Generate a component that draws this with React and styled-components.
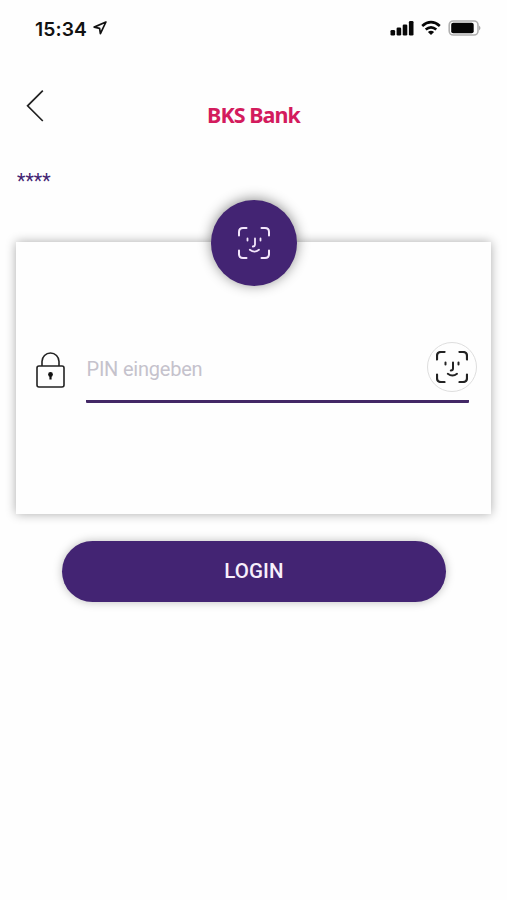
import React, { useState } from 'react'
import styled, { createGlobalStyle } from 'styled-components'

const GlobalStyle = createGlobalStyle`
  * { box-sizing: border-box; }
  body { margin: 0; background: #fefefe; font-family: Roboto, 'Liberation Sans', sans-serif; }
`
const Page = styled.div`
  width: 507px; height: 900px; overflow: hidden;
  display: flex; flex-direction: column; background: #fefefe;
`
const StatusBar = styled.div`
  height: 56px; padding: 0 26px 0 35px;
  display: flex; align-items: center; justify-content: space-between;
`
const Clock = styled.div`
  display: flex; align-items: center; gap: 5px;
  font-family: Inter, sans-serif; font-size: 19.3px; font-weight: 600;
  line-height: 24px; color: #111; padding-top: 1px;
  svg { margin-bottom: 2px; }
`
const Time = styled.span`width: 53px; letter-spacing: .1px; white-space: nowrap;`
const Indicators = styled.div`display: flex; align-items: center; gap: 7px;`
const Header = styled.header`
  height: 100px; padding: 0 26px;
  display: grid; grid-template-columns: 60px 1fr 60px; align-items: center;
`
const BackButton = styled.button`
  width: 18px; height: 34px; padding: 0; border: none; background: none; display: flex;
`
const Logo = styled.h1`
  margin: 17px 0 0; text-align: center; color: #d31b5d;
  font-family: 'Noto Sans', sans-serif; font-size: 21.5px; font-weight: 700;
  line-height: 28px; letter-spacing: -.95px; white-space: nowrap;
`
const User = styled.div`
  height: 86px; padding: 14px 17px 0;
  color: #432473; font-size: 19.5px; line-height: 24px;
`
const Card = styled.section`
  height: 272px; margin: 0 16px; padding: 0 14px 0 20px;
  display: flex; flex-direction: column; background: #fefefe;
  box-shadow: 0 0 10px rgba(0,0,0,.33);
`
const Badge = styled.div`
  width: 86px; height: 86px; margin: -42.5px 0 0 175px; flex: none;
  display: flex; align-items: center; justify-content: center;
  border-radius: 50%; background: #432473; color: #f3e6fb;
  box-shadow: 0 -1px 13px rgba(0,0,0,.45);
`
const PinRow = styled.label`
  margin-top: 55.5px; display: flex; align-items: flex-start;
`
const LockSlot = styled.span`width: 50px; padding-top: 11px; display: flex;`
const Field = styled.span`
  width: 383px; height: 62px; display: flex; align-items: flex-start;
  border-bottom: 3px solid #432866; border-radius: 1px;
`
const PinInput = styled.input`
  width: 341px; flex: none; height: 56px; padding: 0 0 0 .5px; border: none; background: none;
  font-family: Roboto, sans-serif; font-size: 20px; letter-spacing: -.22px; color: #432473;
  &:focus { outline: none; }
  &::placeholder { color: #c5c2cc; opacity: 1; }
`
const FaceButton = styled.button`
  width: 50px; height: 50px; flex: none; padding: 0; margin-top: 1px;
  display: flex; align-items: center; justify-content: center;
  border: 1px solid #dedede; border-radius: 50%; background: #fefefe; color: #222;
`
const LoginButton = styled.button`
  width: 384px; height: 61px; margin: 26.5px 0 0 62px; padding: 0;
  border: none; border-radius: 31px; background: #432473; color: #f8effb;
  font-family: Roboto, sans-serif; font-size: 20.5px; font-weight: 500; letter-spacing: .1px;
  box-shadow: 0 0 10px rgba(0,0,0,.26);
`

function FaceIcon({ size = 32, stroke = 2 }) {
  return (
    <svg width={size} height={size} viewBox="0 0 32 32" fill="none" stroke="currentColor" strokeWidth={stroke} strokeLinecap="round">
      <path d="M1 8.500V5q0-4 4-4h3.500M23.500 1H27q4 0 4 4v3.500M31 23.500V27q0 4-4 4h-3.500M8.500 31H5q-4 0-4-4v-3.500" />
      <path strokeWidth={stroke - 0.2} d="M9.500 11.500v2M22.500 11.500v2M17 11.500v6q0 2-2.200 2M11.800 22.800q4.700 3.500 9.200 0" />
    </svg>
  )
}

function LocationIcon() {
  return (
    <svg width="14" height="14" viewBox="0 0 14 14" fill="none" stroke="#111" strokeWidth="1.700" strokeLinejoin="round">
      <path d="M12.900 1 1.200 6.100l5.400 1.200.8 5.400z" />
    </svg>
  )
}

function SignalIcon() {
  return (
    <svg width="24" height="16" viewBox="0 0 24 16" fill="#080808">
      <rect x=".5" y="10" width="4.600" height="5.500" rx="1.300" />
      <rect x="6.600" y="7.500" width="4.600" height="8" rx="1.300" />
      <rect x="12.700" y="4.500" width="4.600" height="11" rx="1.300" />
      <rect x="18.900" y="1" width="4.600" height="14.500" rx="1.300" />
    </svg>
  )
}

function WifiIcon() {
  return (
    <svg width="20" height="16" viewBox="0 0 20 16" fill="none" stroke="#080808" strokeWidth="2.700">
      <path d="M1.200 6q8.800-7.600 17.600 0M4.700 9.500q5.300-4.400 10.600 0" />
      <path d="M6.900 12q3.100-2.500 6.200 0L10 15z" fill="#080808" stroke="none" />
    </svg>
  )
}

function BatteryIcon() {
  return (
    <svg width="33" height="16" viewBox="0 0 33 16">
      <rect x="1.200" y="1" width="28.800" height="14" rx="4" fill="none" stroke="#b0b0b0" strokeWidth="1.600" />
      <rect x="3.200" y="2.800" width="22.500" height="10.400" rx="2" fill="#050505" />
      <path d="M31 5.500q3 2.500 0 5z" fill="#aaa" />
    </svg>
  )
}

function LockIcon() {
  return (
    <svg width="29" height="36" viewBox="0 0 29 36" fill="none" stroke="#222" strokeWidth="1.600">
      <rect x="1" y="14" width="27" height="21" rx="2" />
      <path d="M6 14V9.500a8.500 8.500 0 0 1 17 0V14" />
      <circle cx="14.500" cy="22.500" r="2.400" fill="#111" stroke="none" />
      <path d="M14.500 23v4.500" stroke="#111" strokeWidth="2.200" />
    </svg>
  )
}

export default function App() {
  const [pin, setPin] = useState('')

  return (
    <Page>
      <GlobalStyle />
      <StatusBar>
        <Clock><Time>15:34</Time><LocationIcon /></Clock>
        <Indicators><SignalIcon /><WifiIcon /><BatteryIcon /></Indicators>
      </StatusBar>
      <Header>
        <BackButton aria-label="Zurück">
          <svg width="18" height="34" viewBox="0 0 18 34" fill="none" stroke="#222" strokeWidth="1.700">
            <path d="M16.800 1.600 1.600 16.800l15.200 15.200" />
          </svg>
        </BackButton>
        <Logo>BKS Bank</Logo>
      </Header>
      <User>****</User>
      <Card>
        <Badge><FaceIcon /></Badge>
        <PinRow>
          <LockSlot><LockIcon /></LockSlot>
          <Field>
            <PinInput type="password" placeholder="PIN eingeben" value={pin} onChange={e => setPin(e.target.value)} />
            <FaceButton type="button" aria-label="Face ID"><FaceIcon stroke={2.2} /></FaceButton>
          </Field>
        </PinRow>
      </Card>
      <LoginButton>LOGIN</LoginButton>
    </Page>
  )
}
